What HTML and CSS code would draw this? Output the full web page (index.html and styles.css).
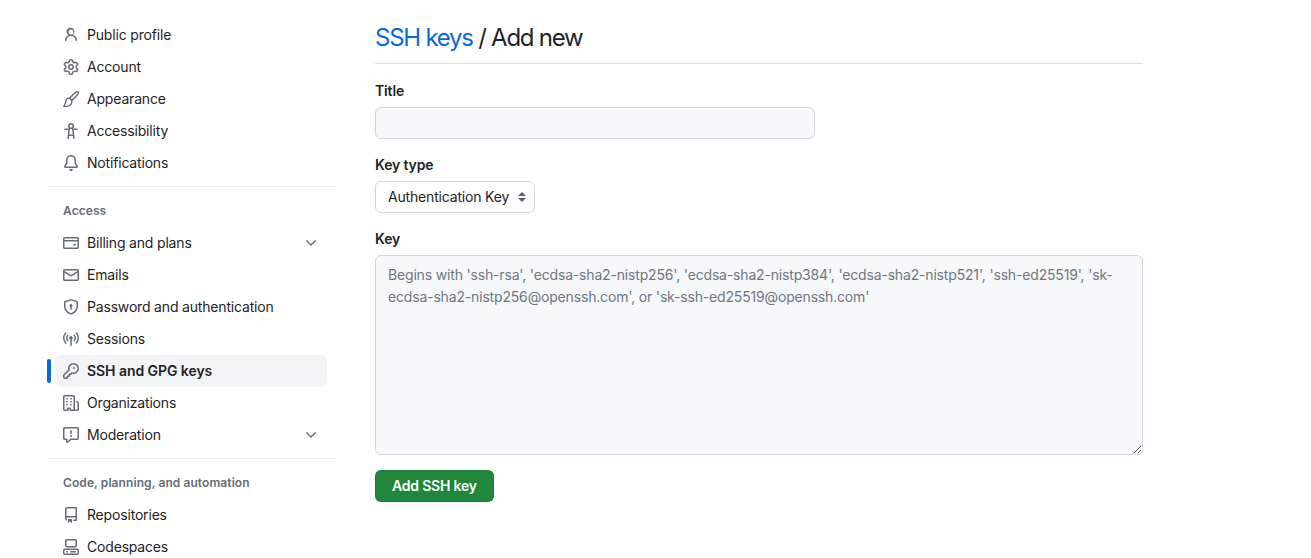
FILE: index.html
```html
<!DOCTYPE html>
<html lang="en">
<head>
  <meta charset="UTF-8" />
  <meta name="viewport" content="width=device-width, initial-scale=1.0"/>
  <title>SSH keys / Add new</title>
  <link rel="stylesheet" href="styles.css">
</head>
<body>
  <div class="page">
    <nav class="sidebar">
      <a class="nav-item" href="#">
        <svg class="icon" viewBox="0 0 16 16"><path d="M10.561 8.073a6.005 6.005 0 0 1 3.432 5.142.75.75 0 1 1-1.498.07 4.5 4.5 0 0 0-8.99 0 .75.75 0 1 1-1.498-.07 6.004 6.004 0 0 1 3.431-5.142 3.999 3.999 0 1 1 4.123 0ZM10.5 5a2.5 2.5 0 1 0-5 0 2.5 2.5 0 0 0 5 0Z"/></svg>
        Public profile
      </a>
      <a class="nav-item" href="#">
        <svg class="icon" viewBox="0 0 16 16"><path d="M8 0a8.2 8.2 0 0 1 .701.031C9.444.095 9.99.645 10.16 1.29l.288 1.107c.018.066.079.158.212.224.231.114.454.243.668.386.123.082.233.09.299.071l1.103-.303c.644-.176 1.392.021 1.82.63.27.385.506.792.704 1.218.315.675.111 1.422-.364 1.891l-.814.806c-.049.048-.098.147-.088.294.016.257.016.515 0 .772-.01.147.038.246.088.294l.814.806c.475.469.679 1.216.364 1.891a7.977 7.977 0 0 1-.704 1.217c-.428.61-1.176.807-1.82.63l-1.102-.302c-.067-.019-.177-.011-.3.071a5.909 5.909 0 0 1-.668.386c-.133.066-.194.158-.211.224l-.29 1.106c-.168.646-.715 1.196-1.458 1.26a8.006 8.006 0 0 1-1.402 0c-.743-.064-1.289-.614-1.458-1.26l-.289-1.106c-.018-.066-.079-.158-.212-.224a5.738 5.738 0 0 1-.668-.386c-.123-.082-.233-.09-.299-.071l-1.103.303c-.644.176-1.392-.021-1.82-.63a8.12 8.12 0 0 1-.704-1.218c-.315-.675-.111-1.422.363-1.891l.815-.806c.05-.048.098-.147.088-.294a6.214 6.214 0 0 1 0-.772c.01-.147-.038-.246-.088-.294l-.815-.806C.635 6.045.431 5.298.746 4.623a7.92 7.92 0 0 1 .704-1.217c.428-.61 1.176-.807 1.82-.63l1.102.302c.067.019.177.011.3-.071.214-.143.437-.272.668-.386.133-.066.194-.158.211-.224l.29-1.106C6.009.645 6.556.095 7.299.03 7.53.01 7.764 0 8 0Zm-.571 1.525c-.036.003-.108.036-.137.146l-.289 1.105c-.147.561-.549.967-.998 1.189-.173.086-.34.183-.5.29-.417.278-.97.423-1.529.27l-1.103-.303c-.109-.03-.175.016-.195.045-.22.312-.412.644-.573.99-.014.031-.021.11.059.19l.815.806c.411.406.562.957.53 1.456a4.709 4.709 0 0 0 0 .582c.032.499-.119 1.05-.53 1.456l-.815.806c-.081.08-.073.159-.059.19.162.346.353.677.573.989.02.03.085.076.195.046l1.102-.303c.56-.153 1.113-.008 1.53.27.161.107.328.204.501.29.447.222.85.629.997 1.189l.289 1.105c.029.109.101.143.137.146a6.6 6.6 0 0 0 1.142 0c.036-.003.108-.036.137-.146l.289-1.105c.147-.561.549-.967.998-1.189.173-.086.34-.183.5-.29.417-.278.97-.423 1.529-.27l1.103.303c.109.029.175-.016.195-.045.22-.313.411-.644.573-.99.014-.031.021-.11-.059-.19l-.815-.806c-.411-.406-.562-.957-.53-1.456a4.709 4.709 0 0 0 0-.582c-.032-.499.119-1.05.53-1.456l.815-.806c.081-.08.073-.159.059-.19a6.464 6.464 0 0 0-.573-.989c-.02-.03-.085-.076-.195-.046l-1.102.303c-.56.153-1.113.008-1.53-.27a4.44 4.44 0 0 0-.501-.29c-.447-.222-.85-.629-.997-1.189l-.289-1.105c-.029-.11-.101-.143-.137-.146a6.6 6.6 0 0 0-1.142 0ZM11 8a3 3 0 1 1-6 0 3 3 0 0 1 6 0ZM9.5 8a1.5 1.5 0 1 0-3.001.001A1.5 1.5 0 0 0 9.5 8Z"/></svg>
        Account
      </a>
      <a class="nav-item" href="#">
        <svg class="icon icon-line" viewBox="0 0 16 16"><path d="M15.200.9c-.8-.8-2.400.2-3.600 1.200L6.500 7.200l2.300 2.300 5.100-5.100c1-1.200 2-2.700 1.300-3.500Z"/><path d="M6.500 7.200C4.500 7 3 8.400 2.800 10.200 2.600 12 2 13.800.8 15.200c2.600.4 5.200 0 6.500-1.200 1.300-1.200 1.800-3 1.500-4.500"/></svg>
        Appearance
      </a>
      <a class="nav-item" href="#">
        <svg class="icon" viewBox="0 0 16 16"><path d="M9.923 5.302c.063.063.122.129.178.198H14A.75.75 0 0 1 14 7h-3.3l.578 5.163.362 2.997a.75.75 0 0 1-1.49.18L9.868 13H6.132l-.282 2.34a.75.75 0 0 1-1.49-.18l.362-2.997L5.300 7H2a.75.75 0 0 1 0-1.500h3.900a2.540 2.540 0 0 1 .176-.198 3 3 0 1 1 3.847 0ZM9.200 7.073h-.001a1.206 1.206 0 0 0-2.398 0L6.305 11.500h3.390ZM9.500 3a1.500 1.500 0 1 0-3.001.001A1.500 1.500 0 0 0 9.500 3Z"/></svg>
        Accessibility
      </a>
      <a class="nav-item" href="#">
        <svg class="icon" viewBox="0 0 16 16"><path d="M8 16c.9 0 1.700-.6 1.900-1.500.1-.3-.1-.5-.4-.5h-3c-.3 0-.5.2-.4.5.2.9 1 1.500 1.900 1.500ZM3 5a5 5 0 0 1 10 0v2.947c0 .05.015.098.042.139l1.703 2.555A1.519 1.519 0 0 1 13.482 13H2.518a1.516 1.516 0 0 1-1.263-2.360l1.703-2.554A.255.255 0 0 0 3 7.947Zm5-3.500A3.500 3.500 0 0 0 4.500 5v2.947c0 .346-.102.683-.294.97l-1.703 2.556a.017.017 0 0 0-.003.01l.001.006c0 .002.002.004.004.006l.006.004.007.001h10.964l.007-.001.006-.004.004-.006.001-.007a.017.017 0 0 0-.003-.01l-1.703-2.554a1.745 1.745 0 0 1-.294-.97V5A3.500 3.500 0 0 0 8 1.500Z"/></svg>
        Notifications
      </a>

      <div class="nav-divider"></div>
      <div class="nav-heading">Access</div>

      <a class="nav-item" href="#">
        <svg class="icon" viewBox="0 0 16 16"><path d="M10.750 9a.75.75 0 0 0 0 1.500h1.500a.75.75 0 0 0 0-1.500h-1.500Z"/><path d="M0 3.750C0 2.784.784 2 1.750 2h12.500c.966 0 1.750.784 1.750 1.750v8.500A1.750 1.750 0 0 1 14.250 14H1.750A1.750 1.750 0 0 1 0 12.250ZM14.500 6.500h-13v5.750c0 .138.112.25.25.25h12.500a.25.25 0 0 0 .25-.25Zm0-2.750a.25.25 0 0 0-.25-.25H1.750a.25.25 0 0 0-.25.25V5h13Z"/></svg>
        Billing and plans
        <svg class="chevron" viewBox="0 0 16 16"><path d="M12.780 5.220a.749.749 0 0 1 0 1.060l-4.250 4.250a.749.749 0 0 1-1.060 0L3.220 6.280a.749.749 0 1 1 1.060-1.060L8 8.939l3.720-3.719a.749.749 0 0 1 1.060 0Z"/></svg>
      </a>
      <a class="nav-item" href="#">
        <svg class="icon" viewBox="0 0 16 16"><path d="M1.750 2h12.500c.966 0 1.750.784 1.750 1.750v8.500A1.750 1.750 0 0 1 14.250 14H1.750A1.750 1.750 0 0 1 0 12.250v-8.500C0 2.784.784 2 1.750 2ZM1.500 12.251c0 .138.112.25.25.25h12.500a.25.25 0 0 0 .25-.25V5.809L8.380 9.397a.75.75 0 0 1-.76 0L1.500 5.809v6.442Zm13-8.181v-.32a.25.25 0 0 0-.25-.25H1.750a.25.25 0 0 0-.25.25v.32L8 7.880Z"/></svg>
        Emails
      </a>
      <a class="nav-item" href="#">
        <svg class="icon" viewBox="0 0 16 16"><path d="m8.533.133 5.250 1.680A1.750 1.750 0 0 1 15 3.480V7c0 1.566-.32 3.182-1.303 4.682-.983 1.498-2.585 2.813-5.032 3.855a1.697 1.697 0 0 1-1.330 0c-2.447-1.042-4.049-2.357-5.032-3.855C1.320 10.182 1 8.566 1 7V3.480a1.750 1.750 0 0 1 1.217-1.667l5.250-1.680a1.748 1.748 0 0 1 1.066 0Zm-.61 1.429.001.001-5.250 1.680a.251.251 0 0 0-.174.237V7c0 1.360.275 2.666 1.057 3.859.784 1.194 2.121 2.342 4.366 3.298a.196.196 0 0 0 .154 0c2.245-.957 3.582-2.103 4.366-3.297C13.225 9.666 13.500 8.358 13.500 7V3.480a.25.25 0 0 0-.174-.238l-5.250-1.680a.25.25 0 0 0-.153 0ZM9.500 6.500c0 .536-.286 1.032-.75 1.300v2.450a.75.75 0 0 1-1.500 0V7.800A1.500 1.500 0 1 1 9.500 6.500Z"/></svg>
        Password and authentication
      </a>
      <a class="nav-item" href="#">
        <svg class="icon" viewBox="0 0 16 16"><path d="M8.750 8.582v5.668a.75.75 0 0 1-1.500 0V8.582a1.750 1.750 0 1 1 1.500 0Zm3.983-7.125a.75.75 0 0 1 1.060.026A7.976 7.976 0 0 1 16 7c0 2.139-.84 4.083-2.207 5.517a.75.75 0 1 1-1.086-1.034A6.474 6.474 0 0 0 14.500 7a6.474 6.474 0 0 0-1.793-4.483.75.75 0 0 1 .026-1.060Zm-9.466 0c.3.286.312.76.026 1.060A6.474 6.474 0 0 0 1.500 7a6.470 6.470 0 0 0 1.793 4.483.75.75 0 0 1-1.086 1.034A7.973 7.973 0 0 1 0 7c0-2.139.84-4.083 2.207-5.517a.75.75 0 0 1 1.060-.026Zm8.556 2.321A4.988 4.988 0 0 1 13 7a4.988 4.988 0 0 1-1.177 3.222.75.75 0 1 1-1.146-.967A3.487 3.487 0 0 0 11.500 7c0-.86-.309-1.645-.823-2.255a.75.75 0 0 1 1.146-.967Zm-6.492.958A3.480 3.480 0 0 0 4.500 7a3.480 3.480 0 0 0 .823 2.255.75.75 0 0 1-1.146.967A4.981 4.981 0 0 1 3 7a4.982 4.982 0 0 1 1.188-3.236.75.75 0 1 1 1.143.972Z"/></svg>
        Sessions
      </a>
      <a class="nav-item active" href="#">
        <svg class="icon" viewBox="0 0 16 16"><path d="M10.500 0a5.499 5.499 0 1 1-1.288 10.848l-.932.932a.749.749 0 0 1-.53.22H7v.75a.749.749 0 0 1-.22.53l-.5.5a.749.749 0 0 1-.53.22H5v.75a.749.749 0 0 1-.22.53l-.5.5a.749.749 0 0 1-.53.22h-2A1.750 1.750 0 0 1 0 14.250v-2c0-.199.079-.389.22-.53l4.932-4.932A5.500 5.500 0 0 1 10.500 0Zm-4 5.500c-.001.431.069.86.205 1.269a.75.75 0 0 1-.181.768L1.500 12.560v1.690c0 .138.112.25.25.25h1.690l.06-.06v-1.190a.75.75 0 0 1 .75-.75h1.190l.06-.06v-1.190a.75.75 0 0 1 .75-.75h1.190l1.023-1.025a.75.75 0 0 1 .768-.18A4 4 0 1 0 6.500 5.500ZM11 6a1 1 0 1 1 0-2 1 1 0 0 1 0 2Z"/></svg>
        SSH and GPG keys
      </a>
      <a class="nav-item" href="#">
        <svg class="icon" viewBox="0 0 16 16"><path d="M1.750 16A1.750 1.750 0 0 1 0 14.250V1.750C0 .784.784 0 1.750 0h8.500C11.216 0 12 .784 12 1.750v12.500c0 .085-.006.168-.018.25h2.268a.25.25 0 0 0 .25-.25V8.285a.25.25 0 0 0-.111-.208l-1.055-.703a.749.749 0 1 1 .832-1.248l1.055.703c.487.325.779.871.779 1.456v5.965A1.750 1.750 0 0 1 14.250 16h-3.500a.766.766 0 0 1-.197-.026c-.099.017-.2.026-.303.026h-3a.75.75 0 0 1-.75-.75V14h-1v1.250a.75.75 0 0 1-.75.75Zm-.25-1.750c0 .138.112.25.25.25H4v-1.250a.75.75 0 0 1 .75-.75h2.500a.75.75 0 0 1 .75.75v1.250h2.250a.25.25 0 0 0 .25-.25V1.750a.25.25 0 0 0-.25-.25h-8.500a.25.25 0 0 0-.25.25ZM3.750 6h.5a.75.75 0 0 1 0 1.500h-.5a.75.75 0 0 1 0-1.500ZM3 3.750A.75.75 0 0 1 3.750 3h.5a.75.75 0 0 1 0 1.500h-.5A.75.75 0 0 1 3 3.750Zm4 3A.75.75 0 0 1 7.750 6h.5a.75.75 0 0 1 0 1.500h-.5A.75.75 0 0 1 7 6.750ZM7.750 3h.5a.75.75 0 0 1 0 1.500h-.5a.75.75 0 0 1 0-1.500ZM3 9.750A.75.75 0 0 1 3.750 9h.5a.75.75 0 0 1 0 1.500h-.5A.75.75 0 0 1 3 9.750ZM7.750 9h.5a.75.75 0 0 1 0 1.500h-.5a.75.75 0 0 1 0-1.500Z"/></svg>
        Organizations
      </a>
      <a class="nav-item" href="#">
        <svg class="icon" viewBox="0 0 16 16"><path d="M0 1.750C0 .784.784 0 1.750 0h12.500C15.216 0 16 .784 16 1.750v9.500A1.750 1.750 0 0 1 14.250 13H8.060l-2.573 2.573A1.458 1.458 0 0 1 3 14.543V13H1.750A1.750 1.750 0 0 1 0 11.250Zm1.750-.25a.25.25 0 0 0-.25.25v9.500c0 .138.112.25.25.25h2a.75.75 0 0 1 .75.75v2.190l2.720-2.720a.749.749 0 0 1 .53-.22h6.500a.25.25 0 0 0 .25-.25v-9.500a.25.25 0 0 0-.25-.25Zm7 2.250v2.500a.75.75 0 0 1-1.500 0v-2.500a.75.75 0 0 1 1.500 0ZM9 9a1 1 0 1 1-2 0 1 1 0 0 1 2 0Z"/></svg>
        Moderation
        <svg class="chevron" viewBox="0 0 16 16"><path d="M12.780 5.220a.749.749 0 0 1 0 1.060l-4.250 4.250a.749.749 0 0 1-1.060 0L3.220 6.280a.749.749 0 1 1 1.060-1.060L8 8.939l3.720-3.719a.749.749 0 0 1 1.060 0Z"/></svg>
      </a>

      <div class="nav-divider"></div>
      <div class="nav-heading">Code, planning, and automation</div>

      <a class="nav-item" href="#">
        <svg class="icon" viewBox="0 0 16 16"><path d="M2 2.500A2.500 2.500 0 0 1 4.500 0h8.750a.75.75 0 0 1 .75.75v12.500a.75.75 0 0 1-.75.75h-2.500a.75.75 0 0 1 0-1.500h1.750v-2h-8a1 1 0 0 0-.714 1.700.75.75 0 1 1-1.072 1.050A2.495 2.495 0 0 1 2 11.500Zm10.500-1h-8a1 1 0 0 0-1 1v6.708A2.486 2.486 0 0 1 4.500 9h8ZM5 12.250a.25.25 0 0 1 .25-.25h3.500a.25.25 0 0 1 .25.25v3.250a.25.25 0 0 1-.4.2l-1.450-1.087a.249.249 0 0 0-.3 0L5.400 15.700a.25.25 0 0 1-.4-.2Z"/></svg>
        Repositories
      </a>
      <a class="nav-item" href="#">
        <svg class="icon" viewBox="0 0 16 16"><path d="M0 11.250c0-.966.784-1.750 1.750-1.750h12.500c.966 0 1.750.784 1.750 1.750v3A1.750 1.750 0 0 1 14.250 16H1.750A1.750 1.750 0 0 1 0 14.250Zm2-9.500C2 .784 2.784 0 3.750 0h8.500C13.216 0 14 .784 14 1.750v5a1.750 1.750 0 0 1-1.750 1.750h-8.500A1.750 1.750 0 0 1 2 6.750Zm1.750-.25a.25.25 0 0 0-.25.25v5c0 .138.112.25.25.25h8.500a.25.25 0 0 0 .25-.25v-5a.25.25 0 0 0-.25-.25Zm-2 9.500a.25.25 0 0 0-.25.25v3c0 .138.112.25.25.25h12.500a.25.25 0 0 0 .25-.25v-3a.25.25 0 0 0-.25-.25Z"/><path d="M7 12.750a.75.75 0 0 1 .75-.75h4.500a.75.75 0 0 1 0 1.500h-4.500a.75.75 0 0 1-.75-.75Zm-4 0a.75.75 0 0 1 .75-.75h.5a.75.75 0 0 1 0 1.500h-.5a.75.75 0 0 1-.75-.75Z"/></svg>
        Codespaces
      </a>
    </nav>

    <main class="content">
      <h1 class="page-title"><a href="#">SSH keys</a> / Add new</h1>
      <form>
        <div class="field">
          <label for="title">Title</label>
          <input class="text-input" id="title" type="text">
        </div>
        <div class="field">
          <label for="type">Key type</label>
          <div class="select-wrap">
            <select class="select" id="type">
              <option>Authentication Key</option>
              <option>Signing Key</option>
            </select>
            <svg class="select-arrows" viewBox="0 0 8 10"><path d="M4 0 8 4H0ZM4 10 0 6h8Z"/></svg>
          </div>
        </div>
        <div class="field">
          <label for="key">Key</label>
          <textarea class="key-input" id="key" placeholder="Begins with 'ssh-rsa', 'ecdsa-sha2-nistp256', 'ecdsa-sha2-nistp384', 'ecdsa-sha2-nistp521', 'ssh-ed25519', 'sk-ecdsa-sha2-nistp256@openssh.com', or 'sk-ssh-ed25519@openssh.com'"></textarea>
        </div>
        <button class="btn-primary" type="button">Add SSH key</button>
      </form>
    </main>
  </div>
</body>
</html>
```

FILE: styles.css
```css
html, body {
  height: 100%;
  margin: 0;
  overflow: hidden;
}

body {
  background-color: white;
  color: #1f2328;
  font-family: Inter, 'Liberation Sans', sans-serif;
  font-size: 14px;
  line-height: 20px;
  letter-spacing: -0.18px;
}

.page {
  display: flex;
  gap: 40px;
  margin-left: 47px;
  padding-top: 19px;
}

/* sidebar */
.sidebar {
  width: 288px;
  flex-shrink: 0;
}

.nav-item {
  position: relative;
  display: flex;
  align-items: center;
  gap: 8px;
  height: 32px;
  margin: 0 8px;
  padding: 0 8px;
  border-radius: 6px;
  color: #1f2328;
  text-decoration: none;
}

.nav-item.active {
  background-color: #f3f4f6;
  font-weight: 600;
  letter-spacing: -0.06px;
}

.nav-item.active::before {
  content: "";
  position: absolute;
  left: -8px;
  top: 4px;
  width: 4px;
  height: 24px;
  border-radius: 6px;
  background-color: #0969da;
}

.icon {
  width: 16px;
  height: 16px;
  flex-shrink: 0;
  fill: #656d76;
}

.icon-line {
  fill: none;
  stroke: #656d76;
  stroke-width: 1.4;
  stroke-linejoin: round;
  stroke-linecap: round;
}

.chevron {
  width: 16px;
  height: 16px;
  margin-left: auto;
  fill: #656d76;
}

.nav-divider {
  height: 1px;
  margin-top: 7px;
  background-color: #e8eaed;
}

.nav-heading {
  padding: 14px 16px 6px;
  color: #656d76;
  font-size: 12px;
  font-weight: 600;
  letter-spacing: 0.08px;
}

/* main form */
.content {
  width: 768px;
}

.page-title {
  margin: 1px 0 17px;
  padding-bottom: 7px;
  border-bottom: 1px solid #d8dee4;
  font-size: 24px;
  font-weight: 400;
  line-height: 36px;
  letter-spacing: -1.25px;
}

.page-title a {
  color: #0969da;
  text-decoration: none;
}

.field {
  margin-bottom: 16px;
}

.field label {
  display: block;
  margin-bottom: 6px;
  font-weight: 600;
  letter-spacing: -0.15px;
}

.text-input {
  display: block;
  width: 440px;
  height: 32px;
  box-sizing: border-box;
  border: 1px solid #d0d7de;
  border-radius: 6px;
  background-color: #f6f8fa;
}

.select-wrap {
  position: relative;
  width: 160px;
}

.select {
  display: block;
  width: 100%;
  height: 32px;
  padding: 0 12px;
  border: 1px solid #d0d7de;
  border-radius: 6px;
  background-color: white;
  color: #1f2328;
  font: inherit;
  letter-spacing: -0.18px;
  appearance: none;
}

.select-arrows {
  position: absolute;
  right: 9px;
  top: 11px;
  width: 8px;
  height: 10px;
  fill: #59636e;
  pointer-events: none;
}

.key-input {
  display: block;
  width: 100%;
  height: 200px;
  box-sizing: border-box;
  padding: 8px 12px;
  border: 1px solid #d0d7de;
  border-radius: 6px;
  background-color: #f6f8fa;
  color: #1f2328;
  font: inherit;
  line-height: 22px;
  letter-spacing: -0.17px;
}

.key-input::placeholder {
  color: #6e7781;
  opacity: 1;
}

.btn-primary {
  display: block;
  height: 32px;
  margin-top: -1px;
  padding: 0 16px;
  border: 1px solid rgba(31, 35, 40, 0.15);
  border-radius: 6px;
  background-color: #1f883d;
  color: white;
  font: inherit;
  font-weight: 600;
  letter-spacing: -0.2px;
}
```
